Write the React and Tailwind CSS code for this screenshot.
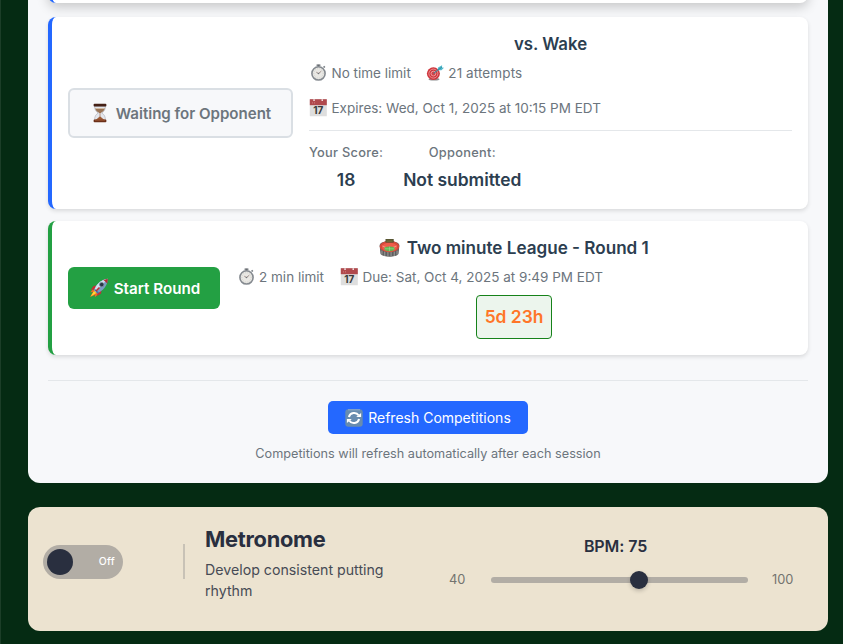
import React from "react";

function Hourglass() {
  return (
    <svg className="h-5 w-4 shrink-0 -translate-y-px" viewBox="0 0 16 20">
      <path d="M2.600 3h10.800c0 3.600-1 5.200-3.600 7 2.600 1.800 3.600 3.400 3.600 7H2.600c0-3.600 1-5.200 3.600-7-2.600-1.800-3.600-3.400-3.600-7z" fill="#e3e6ec" stroke="#a9a9b2" strokeWidth=".6" />
      <path d="M3.200 5.200h9.600c-.4 2.300-1.700 3.400-4.300 4.700h-1c-2.600-1.300-3.900-2.400-4.300-4.700z" fill="#9b7657" />
      <path d="M3.500 5h9v1h-9z" fill="#d2bca5" />
      <path d="M7.700 9h.6v4.500l4.300 3.700H3.400l4.300-3.700z" fill="#9c5b35" />
      <rect x="1.600" y=".8" width="12.800" height="2.600" rx=".9" fill="#452015" />
      <rect x="1.600" y="16.600" width="12.800" height="2.600" rx=".9" fill="#6b3019" />
      <path d="M3 17.100h10" stroke="#b96a42" strokeWidth=".7" />
    </svg>
  );
}

function Stopwatch() {
  return (
    <svg className="h-[18px] w-[18px] shrink-0" viewBox="0 0 18 18">
      <path d="M9.500 .8v3M14.600 3.500l1.200-1.200" stroke="#747a80" strokeWidth="1.700" />
      <path d="M8 1.100h3" stroke="#62676c" strokeWidth="1.400" strokeLinecap="round" />
      <circle cx="9.500" cy="9.400" r="6.600" fill="#e9e8e4" stroke="#858a90" strokeWidth="1.600" />
      <circle cx="9.500" cy="9.400" r="4.700" fill="none" stroke="#c1c1be" strokeWidth=".7" strokeDasharray=".8 1.200" />
      <path d="M9.500 9.500l2.800-2.300M9.500 9.500L7.300 8.200" stroke="#8c7774" strokeWidth=".8" />
      <circle cx="9.500" cy="9.500" r=".8" fill="#71757a" />
    </svg>
  );
}

function Dart() {
  return (
    <svg className="h-[18px] w-[18px] shrink-0" viewBox="0 0 18 18">
      <ellipse cx="8" cy="15.300" rx="5.500" ry="1.200" fill="#8b8d90" />
      <ellipse cx="7.400" cy="9.600" rx="6.500" ry="6.300" fill="#cf343b" />
      <circle cx="7.400" cy="9.600" r="4.500" fill="#cf343b" stroke="#eda6a6" strokeWidth=".8" />
      <circle cx="7.400" cy="9.600" r="2.400" fill="#d74047" stroke="#f0b5b3" strokeWidth=".8" />
      <path d="M7.400 9.600l6-4.800" stroke="#527e8d" strokeWidth="1.100" />
      <path d="M11.500 6.200l.6-2.700 4-2.300-.1 2.300 2 .3-2.600 2.400z" fill="#4fb9cc" />
      <path d="M12.200 5.800l3.600-2.600" stroke="#277f93" strokeWidth=".8" />
    </svg>
  );
}

function CalendarIcon() {
  return (
    <svg className="h-[18px] w-[18px] shrink-0" viewBox="0 0 18 18">
      <rect x=".8" y=".2" width="17" height="17" rx=".5" fill="#dedede" />
      <path d="M.8.200h17v6H.8z" fill="#b0494d" />
      <path d="M4.300.200h1.500v1.700H4.300zM12.500.200H14v1.700h-1.500z" fill="#f0dddd" />
      <path d="M3 3.900h1M5 3.900h1" stroke="#d68a8c" strokeWidth=".8" />
      <text x="9.300" y="15.300" textAnchor="middle" fontSize="10" fontWeight="700" fontFamily="Inter, sans-serif" fill="#393939">17</text>
    </svg>
  );
}

function Rocket() {
  return (
    <svg className="h-5 w-5 shrink-0 -translate-y-px" viewBox="0 0 20 20">
      <path d="M4 11l-2.700 3.200 2.600-.2L1 19l5-2-.2 2.200L9.500 16z" fill="#ef6b24" />
      <path d="M5 13l-3.300 5.400L7.500 15z" fill="#ffda34" />
      <path d="M8 7.500L4.500 8 1.800 11.800l4.100-.2zM12.500 12l-.5 3.600L8.300 18l.1-4.100z" fill="#c62e33" />
      <path d="M5.200 12.400C7 6.800 11 2 18.800.8c-.2 6.500-4.400 11.800-10.500 14.700z" fill="#789bc4" />
      <path d="M5.200 12.400C7 6.800 11 2 18.800.8L6.700 14z" fill="#cfe0f0" />
      <path d="M14.500 1.900l4.300-1.100-.5 4.600z" fill="#b52c34" />
      <circle cx="12.700" cy="6.600" r="2.200" fill="#283747" stroke="#7c8d9c" strokeWidth=".8" />
      <path d="M5.500 11.500l4 3.600" stroke="#4575a7" strokeWidth="1.500" />
      <path d="M7 13l3.500-3.600" stroke="#bc2d35" strokeWidth="1.500" />
    </svg>
  );
}

function Stadium() {
  return (
    <svg className="h-5 w-[21px] shrink-0" viewBox="0 0 20 20" preserveAspectRatio="none">
      <path d="M.600 7.500c0-6 18.800-6 18.800 0l-.8 8.200c-1.800 4-15.400 4-17.200 0z" fill="#5f5f5f" />
      <path d="M2.800 12.500v4M5.500 13.500V18M8.500 14v4.500M11.500 14v4.500M14.500 13.500V18M17.200 12.500v4" stroke="#a4a4a2" strokeWidth=".9" />
      <ellipse cx="10" cy="8.500" rx="9.300" ry="5.800" fill="#d94839" />
      <ellipse cx="10" cy="9.100" rx="7.200" ry="4.300" fill="#ef5c4a" />
      <path d="M3.300 8l4 1.800M16.700 8l-4 1.800" stroke="#f3a692" strokeWidth=".8" />
      <ellipse cx="10" cy="10.800" rx="4.900" ry="2.400" fill="#60b951" />
      <path d="M5.500 10.800h9M10 8.600v4.400" stroke="#a8dda0" strokeWidth=".5" />
      <rect x="6.200" y="1" width="7.800" height="3.600" fill="#514f30" />
      <path d="M7 2.200h6M7 3.400h6" stroke="#86803d" strokeWidth=".6" />
    </svg>
  );
}

function RefreshIcon() {
  return (
    <svg className="h-[18px] w-[18px] shrink-0" viewBox="0 0 18 18">
      <rect x=".3" y=".3" width="17.400" height="17.400" rx="3" fill="#688caf" />
      <path d="M3 .8h12" stroke="#a9bfd2" strokeWidth=".7" />
      <path d="M3.900 8C5 3.200 11.400 2.700 13.500 6.300M14.100 10C13 14.800 6.600 15.300 4.500 11.700" fill="none" stroke="#fff" strokeWidth="2" />
      <path d="M11.200 8h4.900V4.100zM6.800 10H1.900v3.900z" fill="#fff" />
    </svg>
  );
}

function Meta({ icon, children, className = "" }) {
  return (
    <div className={`flex h-5 items-center gap-[4.500px] text-[13.5px] leading-5 whitespace-nowrap text-[#6c757d] ${className}`}>
      {icon}
      <span>{children}</span>
    </div>
  );
}

function Score({ label, value }) {
  return (
    <div className="flex flex-col items-center whitespace-nowrap">
      <span className="text-[12.8px] leading-5 font-medium tracking-[0.28px] text-[#6c757d]">{label}</span>
      <span className="mt-[5px] text-[17.4px] leading-6 font-semibold text-[#2c3e50]">{value}</span>
    </div>
  );
}

function Competitions() {
  return (
    <section className="flex h-[483px] flex-col rounded-b-xl bg-[#f7f8fa] px-5">
      <div className="flex h-[3px] shrink-0 flex-col justify-end">
        <div className="h-10 shrink-0 rounded-lg border-l-4 border-[#2468ff] bg-white shadow-[0_4px_12px_rgba(0,0,0,0.2)]" />
      </div>

      <article className="mt-[14px] flex h-48 shrink-0 items-center gap-4 rounded-lg border-l-4 border-[#2468ff] bg-white px-4 shadow-[0_2px_4px_rgba(0,0,0,0.12)]">
        <button className="flex h-[50px] w-[225px] shrink-0 items-center justify-center gap-2 rounded-md border-2 border-[#dadfe4] bg-[#f7f8fa] pt-0.5 pl-0.5 text-[15.1px] font-semibold tracking-[-0.02px] whitespace-nowrap text-[#6c757d]">
          <Hourglass />
          Waiting for Opponent
        </button>
        <div className="h-full min-w-0 flex-1 pt-4">
          <h3 className="text-center text-[16.8px] leading-[22px] font-semibold text-[#2c3e50]">vs. Wake</h3>
          <div className="mt-2 flex gap-[15px]">
            <Meta icon={<Stopwatch />}>No time limit</Meta>
            <Meta icon={<Dart />}><span className="tracking-[0.1px]">21 attempts</span></Meta>
          </div>
          <Meta className="mt-[15px]" icon={<CalendarIcon />}>Expires: Wed, Oct 1, 2025 at 10:15 PM EDT</Meta>
          <div className="mt-3 flex gap-5 border-t border-[#e4e7ea] pt-3">
            <Score label="Your Score:" value="18" />
            <Score label="Opponent:" value="Not submitted" />
          </div>
        </div>
      </article>

      <article className="mt-3 flex h-[134px] shrink-0 items-center gap-4 rounded-lg border-l-4 border-[#23a043] bg-white px-4 shadow-[0_2px_4px_rgba(0,0,0,0.12)]">
        <button className="flex h-[42px] w-[152px] shrink-0 items-center justify-center gap-[5px] rounded-md bg-[#23a043] pt-0.5 pl-px text-[15.2px] font-semibold whitespace-nowrap text-white">
          <Rocket />
          Start Round
        </button>
        <div className="h-full min-w-0 flex-1 pt-4">
          <h3 className="flex items-center justify-center gap-[6.500px] text-[17.1px] leading-[22px] font-semibold text-[#2c3e50]">
            <Stadium />
            Two minute League - Round 1
          </h3>
          <div className="mt-2 flex gap-4 pl-[0.5px]">
            <Meta icon={<Stopwatch />}>2 min limit</Meta>
            <Meta icon={<CalendarIcon />}>Due: Sat, Oct 4, 2025 at 9:49 PM EDT</Meta>
          </div>
          <div className="mx-auto mt-2 flex h-11 w-[76px] items-center justify-center rounded border border-[#16821a] bg-[#ecf5ed] text-[17.4px] font-semibold whitespace-nowrap text-[#ff7628]">5d 23h</div>
        </div>
      </article>

      <footer className="mt-[25px] flex flex-col items-center border-t border-[#e4e7ea] pt-5">
        <button className="flex h-[33px] w-[200px] items-center justify-center gap-[5px] rounded-[5px] bg-[#2468ff] pt-px text-sm whitespace-nowrap text-white">
          <RefreshIcon />
          Refresh Competitions
        </button>
        <p className="mt-[10px] text-[12.7px] leading-5 whitespace-nowrap text-[#6c757d]">Competitions will refresh automatically after each session</p>
      </footer>
    </section>
  );
}

function Metronome() {
  return (
    <section className="mt-6 flex h-[124px] rounded-xl bg-[#ece3d0] text-[#292f3f]">
      <div className="mt-[38px] ml-[15px] flex h-[34px] w-20 shrink-0 items-center justify-between rounded-full bg-[#b2ada5] pr-2 pl-1">
        <span className="h-[26px] w-[26px] rounded-full bg-[#292f3f]" />
        <span className="text-[10.4px] font-medium tracking-[0.3px] text-white">Off</span>
      </div>
      <div className="mt-[37px] ml-[60px] h-[35px] w-0.5 shrink-0 bg-[#c8c2b6]" />
      <div className="ml-5 w-[200px] shrink-0 pt-[18px]">
        <h2 className="text-[21.8px] leading-7 font-bold tracking-[-0.27px]">Metronome</h2>
        <p className="mt-[6px] text-[14.2px] leading-[21px] text-[#474b55]">Develop consistent putting rhythm</p>
      </div>
      <div className="ml-11 w-[345px] shrink-0 pt-[29px]">
        <div className="pr-[12px] text-center text-base leading-5 font-semibold tracking-[-0.1px]">BPM: 75</div>
        <div className="mt-[14px] flex h-5 items-center text-[12.8px] text-[#73736f]">
          <span className="w-[42px] shrink-0">40</span>
          <div className="flex h-1.5 w-[257px] shrink-0 items-center rounded-full bg-[#b2ada5]">
            <span className="ml-[139px] h-[18px] w-[18px] rounded-full bg-[#292f3f] shadow-[0_2px_4px_rgba(0,0,0,0.2)]" />
          </div>
          <span className="ml-6">100</span>
        </div>
      </div>
    </section>
  );
}

export default function App() {
  return (
    <main className="h-[644px] w-[843px] overflow-hidden border-l border-[#1c3e28] bg-[#052b13] pr-[14px] pl-[27px] font-['Inter',sans-serif]">
      <div className="w-[800px]">
        <Competitions />
        <Metronome />
      </div>
    </main>
  );
}
